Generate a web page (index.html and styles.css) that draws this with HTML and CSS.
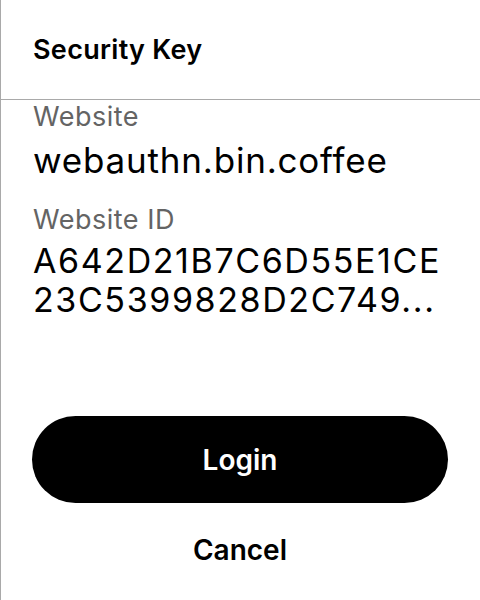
FILE: index.html
```html
<!DOCTYPE html>
<html lang="en">
<head>
<meta charset="utf-8">
<title>Security Key</title>
<link rel="stylesheet" href="styles.css">
</head>
<body>
<div class="sheet">
  <header class="header">
    <h1 class="title">Security Key</h1>
  </header>
  <main class="content">
    <div class="field">
      <div class="label">Website</div>
      <div class="value">webauthn.bin.coffee</div>
    </div>
    <div class="field">
      <div class="label">Website ID</div>
      <div class="value hex">A642D21B7C6D55E1CE<br>23C5399828D2C749...</div>
    </div>
  </main>
  <div class="actions">
    <button class="btn-primary">Login</button>
    <button class="btn-link">Cancel</button>
  </div>
</div>
</body>
</html>
```

FILE: styles.css
```css
html, body {
  margin: 0;
  padding: 0;
  background: #ffffff;
}
body {
  font-family: Inter, "Noto Sans", sans-serif;
  color: #000;
}
.sheet {
  width: 480px;
  height: 600px;
  box-sizing: border-box;
  border-left: 1px solid #a9a9a9;
  display: flex;
  flex-direction: column;
  overflow: hidden;
}
.header {
  height: 99px;
  flex: none;
  border-bottom: 1px solid #a9a9a9;
  display: flex;
  align-items: center;
  padding-left: 32px;
}
.title {
  margin: 0;
  font-size: 27px;
  font-weight: 600;
  line-height: 1;
  letter-spacing: 0.3px;
}
.content {
  padding: 0 32px;
  display: flex;
  flex-direction: column;
  gap: 23px;
}
.label {
  font-size: 27px;
  color: #646464;
  line-height: 34px;
  letter-spacing: 0.5px;
}
.value {
  font-size: 35px;
  line-height: 40px;
  margin-top: 6px;
  letter-spacing: 0.8px;
}
.hex {
  font-size: 34px;
  line-height: 39px;
  margin-top: 4px;
  letter-spacing: 1.6px;
  white-space: nowrap;
}
.actions {
  margin-top: auto;
  padding: 0 32px 3px 31px;
  display: flex;
  flex-direction: column;
  align-items: stretch;
}
.btn-primary {
  height: 87px;
  border: none;
  border-radius: 44px;
  background: #000;
  color: #fff;
  font-family: inherit;
  font-size: 28px;
  font-weight: 600;
  cursor: pointer;
}
.btn-link {
  height: 94px;
  border: none;
  background: transparent;
  color: #000;
  font-family: inherit;
  font-size: 28px;
  font-weight: 600;
  cursor: pointer;
}
```
